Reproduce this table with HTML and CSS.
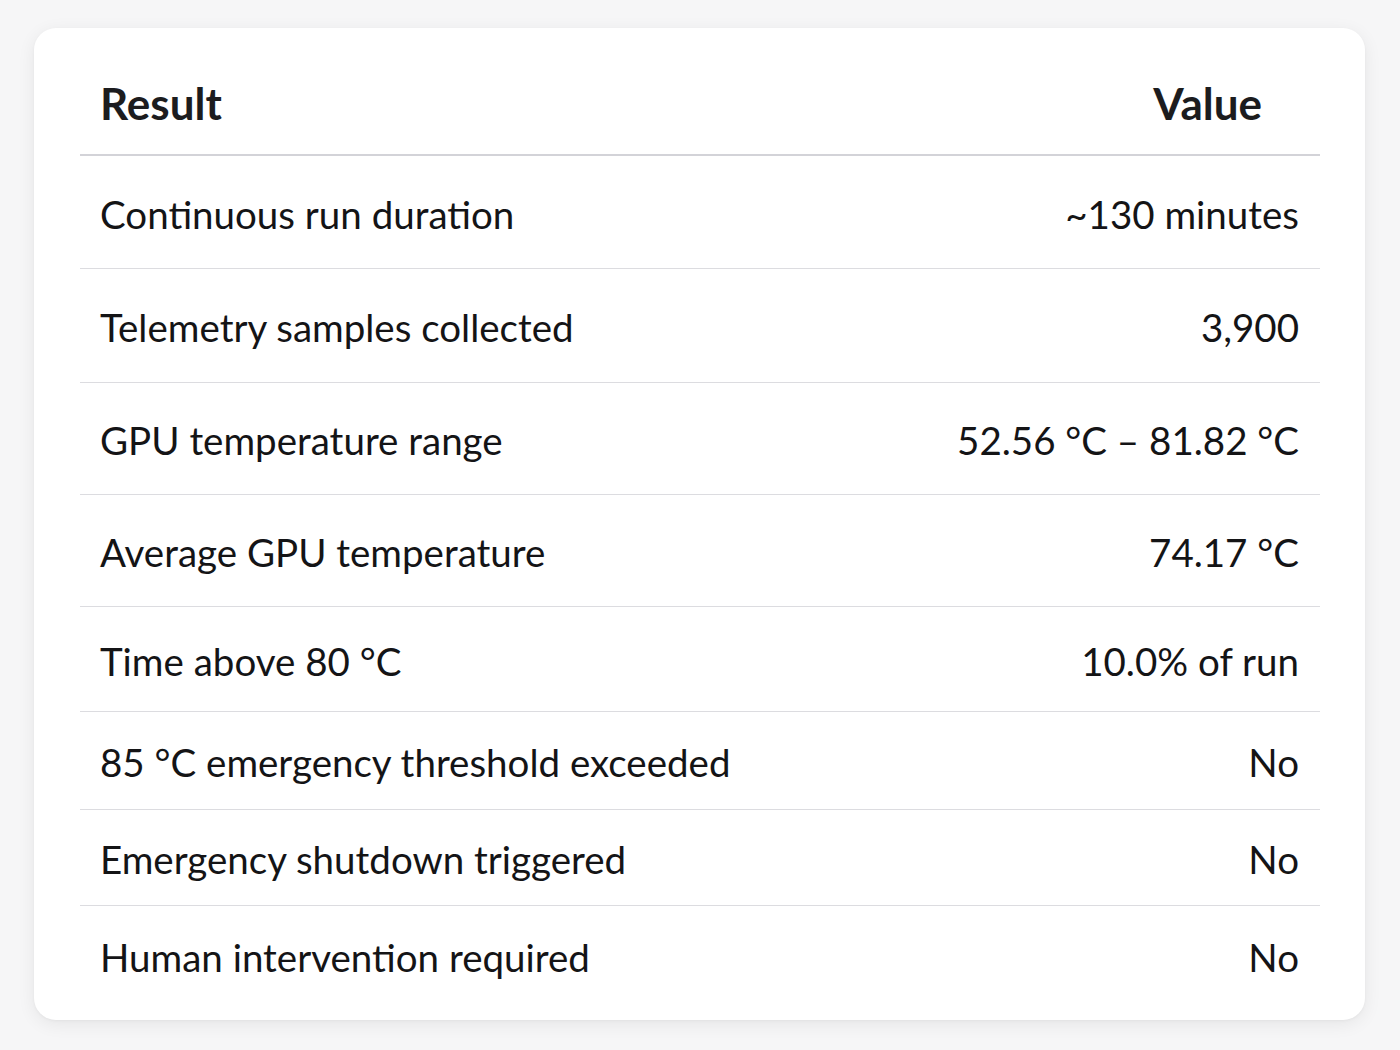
FILE: index.html
```
<!DOCTYPE html>
<html lang="en">
<head>
<meta charset="utf-8">
<title>Results</title>
<link rel="stylesheet" href="styles.css">
</head>
<body>
<div class="card">
  <table class="results">
    <thead>
      <tr><th class="col-result">Result</th><th class="col-value">Value</th></tr>
    </thead>
    <tbody>
      <tr><td>Continuous run duration</td><td class="val">~130 minutes</td></tr>
      <tr><td>Telemetry samples collected</td><td class="val">3,900</td></tr>
      <tr><td>GPU temperature range</td><td class="val">52.56 °C – 81.82 °C</td></tr>
      <tr><td>Average GPU temperature</td><td class="val">74.17 °C</td></tr>
      <tr><td>Time above 80 °C</td><td class="val">10.0% of run</td></tr>
      <tr><td>85 °C emergency threshold exceeded</td><td class="val">No</td></tr>
      <tr><td>Emergency shutdown triggered</td><td class="val">No</td></tr>
      <tr><td>Human intervention required</td><td class="val">No</td></tr>
    </tbody>
  </table>
</div>
</body>
</html>
```
FILE: styles.css
```
html, body {
  margin: 0;
  padding: 0;
}
body {
  background: #f6f6f7;
  font-family: Lato, "Open Sans", "Liberation Sans", sans-serif;
  color: #141416;
  padding: 28px 35px 30px 34px;
}
.card {
  background: #ffffff;
  border-radius: 22px;
  box-shadow: 0 4px 18px rgba(0, 0, 0, 0.07), 0 1px 3px rgba(0, 0, 0, 0.04);
  padding: 0 45px 0 46px;
  height: 992px;
  box-sizing: border-box;
}
.results {
  width: 100%;
  border-collapse: collapse;
}
.results th {
  font-size: 44px;
  font-weight: 700;
  height: 127px;
  padding: 24px 20px 0 20px;
  box-sizing: border-box;
  border-bottom: 2px solid #d3d3d8;
  vertical-align: middle;
  line-height: 48px;
  color: #1c1c1e;
}
.col-result { text-align: left; }
.results th.col-value { text-align: right; padding-right: 58px; }
.results td {
  font-size: 38.5px;
  font-weight: 400;
  line-height: 46px;
  padding: 4px 20px 0 20px;
  border-bottom: 1px solid #dcdce0;
  vertical-align: middle;
  box-sizing: border-box;
}
.results td.val { text-align: right; padding-right: 21px; }
.results tbody tr:nth-child(1) td { height: 113px; }
.results tbody tr:nth-child(2) td { height: 114px; }
.results tbody tr:nth-child(3) td { height: 112px; }
.results tbody tr:nth-child(4) td { height: 112px; }
.results tbody tr:nth-child(5) td { height: 105px; }
.results tbody tr:nth-child(6) td { height: 98px; }
.results tbody tr:nth-child(7) td { height: 96px; }
.results tbody tr:nth-child(8) td { height: 100px; border-bottom: none; }
```
